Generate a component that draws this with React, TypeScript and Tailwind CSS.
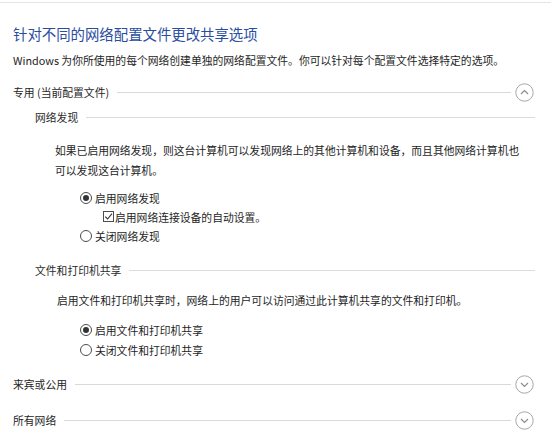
import type { ReactNode } from 'react'

function Chevron({ up }: { up?: boolean }) {
  return (
    <svg width="19" height="19" viewBox="0 0 19 19" className="shrink-0">
      <circle cx="9.5" cy="9.5" r="8.7" fill="none" stroke="#a6a6a6" strokeWidth="1" />
      {up
        ? <path d="M6 11 L9.5 7.5 L13 11" fill="none" stroke="#8c8c8c" strokeWidth="1.2" />
        : <path d="M6 8 L9.5 11.5 L13 8" fill="none" stroke="#8c8c8c" strokeWidth="1.2" />}
    </svg>
  )
}

function ProfileHeader({ label, up, className = '' }: { label: string; up?: boolean; className?: string }) {
  return (
    <div className={`flex items-center h-[20px] pl-[13px] pr-[17px] ${className}`}>
      <span className="text-[#1e1e1e] whitespace-nowrap">{label}</span>
      <div className="flex-1 h-px bg-[#d9d9d9] ml-[8px] mr-[4px]" />
      <Chevron up={up} />
    </div>
  )
}

function SubHeader({ label, className = '' }: { label: string; className?: string }) {
  return (
    <div className={`flex items-center h-[16px] pl-[35px] pr-[16px] ${className}`}>
      <span className="text-[#2b2b2b] whitespace-nowrap">{label}</span>
      <div className="flex-1 h-px bg-[#dcdcdc] ml-[8px]" />
    </div>
  )
}

function Radio({ checked, children }: { checked?: boolean; children: ReactNode }) {
  return (
    <div className="flex items-center pl-[80px]">
      <span className="w-[12px] h-[12px] rounded-full border border-[#4d4d4d] bg-white flex items-center justify-center shrink-0">
        {checked && <span className="w-[6px] h-[6px] rounded-full bg-[#333]" />}
      </span>
      <span className="ml-[3px] text-[#1e1e1e]">{children}</span>
    </div>
  )
}

function Check({ children }: { children: ReactNode }) {
  return (
    <div className="flex items-center pl-[103px]">
      <span className="w-[11px] h-[11px] border border-[#4d4d4d] bg-white flex items-center justify-center shrink-0">
        <svg width="9" height="9" viewBox="0 0 9 9">
          <path d="M1.2 4.6 L3.6 7 L8 1.6" fill="none" stroke="#333" strokeWidth="1.1" />
        </svg>
      </span>
      <span className="ml-[1px] text-[#1e1e1e]">{children}</span>
    </div>
  )
}

export default function App() {
  return (
    <div className="w-[551px] h-[435px] bg-white overflow-hidden font-['Noto_Sans_CJK_SC','Microsoft_YaHei',sans-serif] text-[10.8px] leading-[16px]">
      {/* top rule */}
      <div className="mt-[2px] h-px bg-[#e4e4e4]" />

      <h1 className="mt-[21px] pl-[13px] h-[20px] leading-[20px] text-[14.4px] text-[#2a4d9e]">
        针对不同的网络配置文件更改共享选项
      </h1>
      <p className="mt-[8px] pl-[13px] text-[#1e1e1e] whitespace-nowrap">
        Windows 为你所使用的每个网络创建单独的网络配置文件。你可以针对每个配置文件选择特定的选项。
      </p>

      {/* 专用 */}
      <ProfileHeader label="专用 (当前配置文件)" up className="mt-[14px]" />

      <SubHeader label="网络发现" className="mt-[7px]" />
      <p className="mt-[15px] pl-[55px] leading-[20px] text-[#1e1e1e] whitespace-nowrap">
        如果已启用网络发现，则这台计算机可以发现网络上的其他计算机和设备，而且其他网络计算机也
        <br />
        可以发现这台计算机。
      </p>
      <div className="mt-[8px] flex flex-col [&>div]:h-[19px]">
        <Radio checked>启用网络发现</Radio>
        <Check>启用网络连接设备的自动设置。</Check>
        <Radio>关闭网络发现</Radio>
      </div>

      <SubHeader label="文件和打印机共享" className="mt-[17px]" />
      <p className="mt-[14px] pl-[57px] text-[#1e1e1e] whitespace-nowrap">
        启用文件和打印机共享时，网络上的用户可以访问通过此计算机共享的文件和打印机。
      </p>
      <div className="mt-[12px] flex flex-col [&>div]:h-[20px]">
        <Radio checked>启用文件和打印机共享</Radio>
        <Radio>关闭文件和打印机共享</Radio>
      </div>

      <ProfileHeader label="来宾或公用" className="mt-[14px]" />
      <ProfileHeader label="所有网络" className="mt-[16px]" />
    </div>
  )
}
